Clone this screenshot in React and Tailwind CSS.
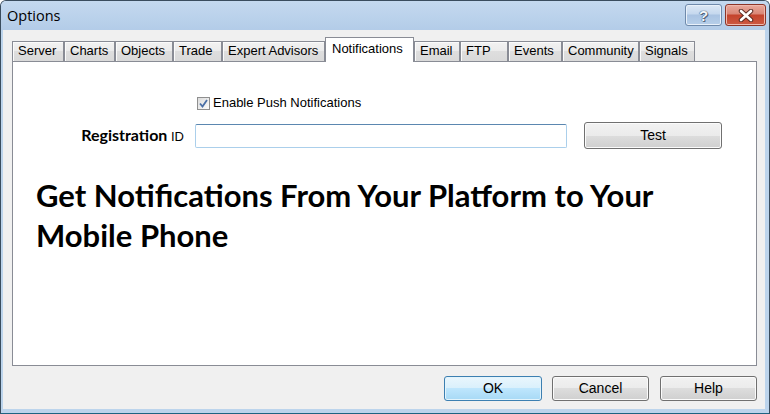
import React from 'react';

const TABS = [
  ['Server', 52],
  ['Charts', 51],
  ['Objects', 58],
  ['Trade', 49],
  ['Expert Advisors', 103],
  ['Notifications', 89, true],
  ['Email', 46],
  ['FTP', 48],
  ['Events', 54],
  ['Community', 77],
  ['Signals', 56],
];

const btn = "h-[25px] rounded-[3px] border border-[#707070] bg-[linear-gradient(to_bottom,#f2f2f2_0%,#ebebeb_50%,#dddddd_50%,#cfcfcf_100%)] shadow-[inset_0_0_0_1px_#fbfbfb] text-[14px] text-black flex items-center justify-center";

export default function App() {
  return (
    <div className="w-[770px] h-[414px] bg-[#bcd4ec] border border-[#3a4d5e] border-b-[#1d6482] rounded-t-[6px] flex flex-col overflow-hidden font-['Liberation_Sans',Arial,sans-serif]">
      {/* title bar */}
      <div className="h-[29px] shrink-0 flex items-start bg-[linear-gradient(to_bottom,#c4d9ef,#b3cce8)]">
        <span className="ml-[6px] mt-[5px] text-[14.5px] leading-[20px] text-black font-['Open_Sans',sans-serif]">Options</span>
        <div className="ml-auto mr-[3px] mt-[3px] flex gap-[3px]">
          <div className="w-[37px] h-[22px] rounded-[3px] border border-[#6f8aab] bg-[linear-gradient(to_bottom,#dce8f5_0%,#c5d8ee_45%,#a9c3e2_50%,#b7cfe9_100%)] shadow-[inset_0_0_0_1px_#e9f1fa] flex items-center justify-center">
            <span className="text-[15px] font-bold leading-none text-[#f4f7fb] [text-shadow:0_0_1px_#34475e,0_0_1px_#34475e,1px_1px_0_#5a6d85]">?</span>
          </div>
          <div className="w-[41px] h-[22px] rounded-[3px] border border-[#8c3528] bg-[linear-gradient(to_bottom,#e9a99c_0%,#d98676_45%,#c4432c_50%,#cc5a43_100%)] shadow-[inset_0_0_0_1px_#efb9ae] flex items-center justify-center">
            <svg width="16" height="13" viewBox="0 0 16 13">
              <path d="M3 2 L13 11 M13 2 L3 11" stroke="#5a2a22" strokeWidth="4.5" strokeLinecap="round" />
              <path d="M3 2 L13 11 M13 2 L3 11" stroke="#ffffff" strokeWidth="2.6" strokeLinecap="round" />
            </svg>
          </div>
        </div>
      </div>

      {/* client */}
      <div className="flex-1 ml-[2px] mr-[4px] mb-[4px] bg-[#f0f0f0] pl-[9px] pt-[7px] flex flex-col">
        {/* tabs */}
        <div className="h-[24px] flex items-end relative z-10">
          {TABS.map(([label, w, sel]) => (
            <div
              key={label}
              style={{ width: w }}
              className={sel
                ? "h-[25px] -mb-[1px] border border-b-0 border-[#898c95] bg-white text-[13px] leading-[19px] text-black pl-[6px] pt-[1px] shrink-0"
                : "h-[20px] border border-b-0 border-[#898c95] bg-[linear-gradient(to_bottom,#f2f2f2_0%,#ebebeb_50%,#dedede_50%,#d9d9d9_100%)] shadow-[inset_1px_1px_0_#fbfbfb] text-[13px] leading-[18px] text-black pl-[5px] shrink-0"}
            >
              {label}
            </div>
          ))}
        </div>

        {/* panel */}
        <div className="w-[745px] h-[305px] border border-[#898c95] bg-white flex flex-col">
          <div className="mt-[34px] ml-[184px] h-[14px] flex items-center gap-[3px]">
            <div className="w-[13px] h-[13px] border border-[#8f8f8f] bg-[linear-gradient(135deg,#dcdcdc,#fbfbfb)] flex items-center justify-center">
              <svg width="9" height="9" viewBox="0 0 9 9">
                <path d="M1 4.5 L3.5 7.5 L8 1" stroke="#4a6fa6" strokeWidth="1.8" fill="none" />
              </svg>
            </div>
            <span className="text-[13px] leading-[14px] text-black">Enable Push Notifications</span>
          </div>

          <div className="mt-[12px] flex items-center h-[27px]">
            <div className="w-[171px] text-right whitespace-nowrap">
              <span className="font-['Lato',sans-serif] font-bold text-[16px] text-black">Registration</span>
              <span className="text-[13px] text-black"> ID</span>
            </div>
            <div className="ml-[11px] w-[372px] h-[24px] rounded-[2px] border border-[#abcfeb] border-t-[#5b87b0] bg-white" />
            <div className={`ml-[17px] w-[138px] !h-[27px] ${btn}`}>Test</div>
          </div>

          <h1 className="mt-[26px] ml-[23px] font-['Lato',sans-serif] font-bold text-[31px] leading-[40px] text-black whitespace-nowrap">
            Get Notifications From Your Platform to Your<br />Mobile Phone
          </h1>
        </div>

        {/* buttons */}
        <div className="w-[745px] mt-[10px] flex justify-end">
          <div className="w-[98px] h-[25px] rounded-[3px] border border-[#3c7fb1] bg-[linear-gradient(to_bottom,#eaf6fd_0%,#d9f0fc_50%,#bee6fd_50%,#a7d9f5_100%)] shadow-[inset_0_0_0_1px_#e3f4fc] text-[14px] text-black flex items-center justify-center">OK</div>
          <div className={`ml-[10px] w-[97px] ${btn}`}>Cancel</div>
          <div className={`ml-[11px] w-[97px] ${btn}`}>Help</div>
        </div>
      </div>
    </div>
  );
}
